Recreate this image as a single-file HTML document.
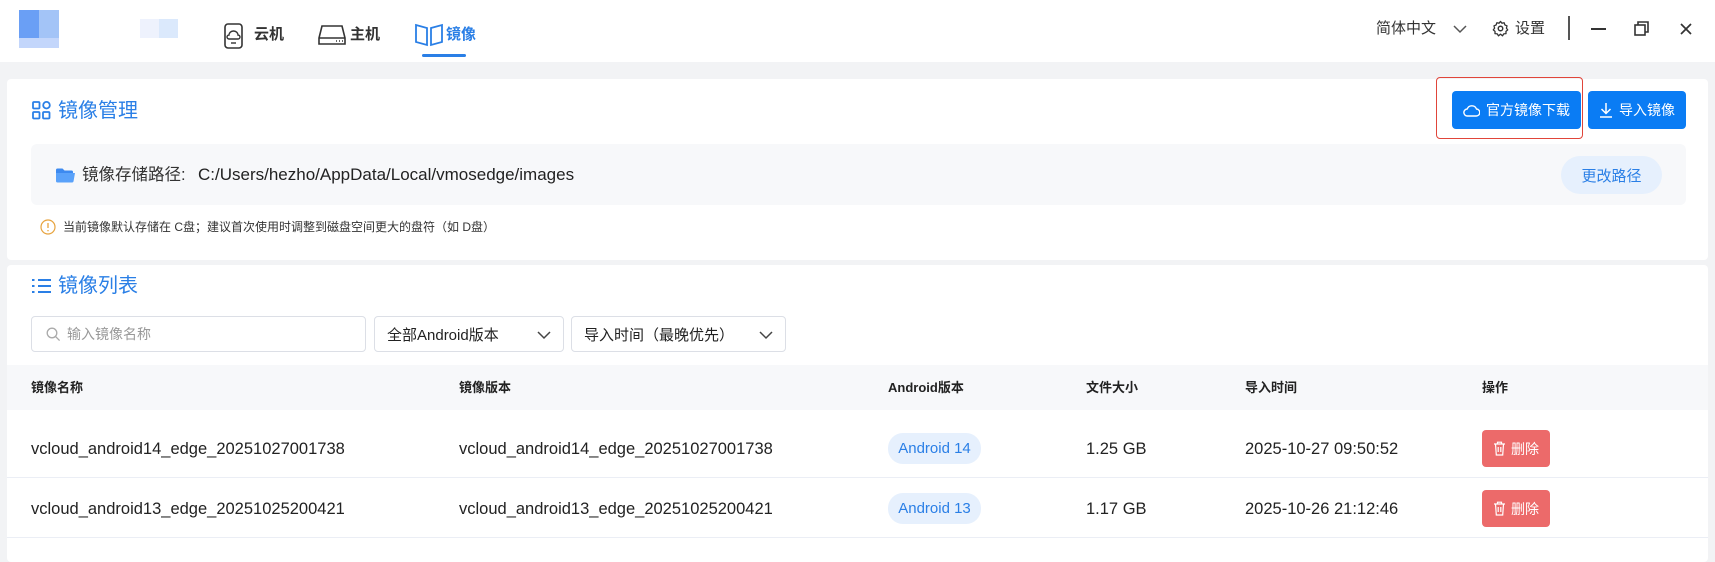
<!DOCTYPE html>
<html><head><meta charset="utf-8"><style>
*{box-sizing:border-box;margin:0;padding:0}
body{width:1715px;height:562px;overflow:hidden;background:#f2f3f5;font-family:"Liberation Sans","Noto Sans CJK SC",sans-serif;color:#222;position:relative}
.a{position:absolute}
.hdr{left:0;top:0;width:1715px;height:62px;background:#fff}
.nav{font-size:15px;font-weight:bold;color:#333;line-height:20px}
.card{background:#fff;border-radius:4px}
.blue{color:#2a7fe6}
.btn{background:#0a7cf4;color:#fff;border-radius:4px;font-size:14px;display:flex;align-items:center;justify-content:center;gap:6px}
.th{font-size:13px;font-weight:bold;color:#222;top:379px;line-height:18px}
.td{font-size:16.5px;color:#222;line-height:20px}
.pill{background:#e6f0fd;color:#2a7fe6;border-radius:15px;font-size:15px;display:flex;align-items:center;justify-content:center}
.del{background:#ec6a6a;color:#fff;border-radius:4px;font-size:14px;display:flex;align-items:center;justify-content:center;gap:5px}
.sel{border:1px solid #dcdfe6;border-radius:4px;background:#fff;font-size:15px;display:flex;align-items:center;padding-left:12px}
</style></head><body>
<div class="a hdr"></div>
<div class="a" style="left:19px;top:10px;width:40px;height:37px;background:linear-gradient(90deg,#6a9ff5 50%,#a3c4f7 50%)"></div>
<div class="a" style="left:19px;top:38px;width:40px;height:10px;background:#c3d6fb"></div>
<div class="a" style="left:140px;top:19px;width:38px;height:19px;background:linear-gradient(90deg,#eef2fd 50%,#dbe9fc 50%)"></div>
<svg class="a" style="left:224px;top:23px" width="19" height="26" viewBox="0 0 19 26"><rect x="1" y="1" width="17" height="24" rx="3" fill="none" stroke="#333" stroke-width="1.6"/><path d="M5 12a4.5 4 0 0 1 9 0a2 2 0 0 1 0 4H5a2 2 0 0 1 0-4z" fill="none" stroke="#333" stroke-width="1.4"/><path d="M7 20h5" stroke="#333" stroke-width="1.4"/></svg>
<div class="a nav" style="left:254px;top:25px">云机</div>
<svg class="a" style="left:318px;top:24px" width="28" height="22" viewBox="0 0 28 22"><path d="M4 2h20l3 12v6H1v-6z" fill="none" stroke="#333" stroke-width="1.6"/><path d="M1 14h26" stroke="#333" stroke-width="1.5"/><path d="M18 17h1M21 17h1M24 17h1" stroke="#333" stroke-width="1.5"/></svg>
<div class="a nav" style="left:350px;top:25px">主机</div>
<svg class="a" style="left:414px;top:23px" width="30" height="24" viewBox="0 0 30 24"><path d="M2 2l11 3v17L2 19z" fill="none" stroke="#2a7fe6" stroke-width="1.8"/><path d="M17 5l11-3v17l-11 3z" fill="none" stroke="#2a7fe6" stroke-width="1.8"/></svg>
<div class="a nav blue" style="left:446px;top:25px">镜像</div>
<div class="a" style="left:422px;top:54px;width:44px;height:3px;background:#2a7fe6;border-radius:2px"></div>
<div class="a" style="left:1376px;top:19px;font-size:15px;line-height:20px;color:#333">简体中文</div>
<svg class="a" style="left:1453px;top:24px" width="14" height="10" viewBox="0 0 14 10"><path d="M1 2l6 6 6-6" fill="none" stroke="#555" stroke-width="1.5"/></svg>
<svg class="a" style="left:1492px;top:20px" width="17" height="17" viewBox="0 0 24 24"><circle cx="12" cy="12" r="3.2" fill="none" stroke="#333" stroke-width="2"/><path d="M12 2l2 2.5 3.2-.6 1 3.1 3 1.3-.9 3.2 1.9 2.5-2.5 2 .1 3.3-3.3.3-1.6 2.8L12 20l-2.9 2.4-1.6-2.8-3.3-.3.1-3.3-2.5-2 1.9-2.5L2.8 8.3l3-1.3 1-3.1L10 4.5z" fill="none" stroke="#333" stroke-width="1.8" stroke-linejoin="round"/></svg>
<div class="a" style="left:1515px;top:19px;font-size:15px;line-height:20px;color:#333">设置</div>
<div class="a" style="left:1568px;top:16px;width:1.5px;height:24px;background:#555"></div>
<div class="a" style="left:1591px;top:28px;width:15px;height:2px;background:#333"></div>
<svg class="a" style="left:1634px;top:21px" width="15" height="15" viewBox="0 0 15 15"><rect x="1" y="4" width="10" height="10" fill="none" stroke="#333" stroke-width="1.6"/><path d="M4 4V1h10v10h-3" fill="none" stroke="#333" stroke-width="1.6"/></svg>
<svg class="a" style="left:1680px;top:23px" width="12" height="12" viewBox="0 0 12 12"><path d="M1 1l10 10M11 1L1 11" stroke="#333" stroke-width="1.7"/></svg>

<div class="a card" style="left:7px;top:79px;width:1701px;height:181px"></div>
<svg class="a" style="left:32px;top:101px" width="19" height="19" viewBox="0 0 19 19"><g fill="none" stroke="#2a7fe6" stroke-width="1.8"><rect x="1" y="1" width="6.5" height="6.5" rx="1"/><circle cx="14.5" cy="4.2" r="3.3"/><rect x="1" y="11" width="6.5" height="6.5" rx="1"/><rect x="11" y="11" width="6.5" height="6.5" rx="1"/></g></svg>
<div class="a blue" style="left:58px;top:98px;font-size:20px;line-height:26px">镜像管理</div>
<div class="a" style="left:1436px;top:77px;width:147px;height:62px;border:1.5px solid #e0453a;border-radius:4px"></div>
<div class="a btn" style="left:1452px;top:91px;width:129px;height:38px"><svg width="17" height="13" viewBox="0 0 17 13"><path d="M4.5 12a3.5 3.5 0 0 1-.3-7A5 5 0 0 1 13.5 5a3.5 3.5 0 0 1-.5 7z" fill="none" stroke="#fff" stroke-width="1.4"/></svg>官方镜像下载</div>
<div class="a btn" style="left:1588px;top:91px;width:98px;height:38px"><svg width="14" height="16" viewBox="0 0 14 16"><path d="M7 1v10M2.5 7l4.5 4.5L11.5 7M1 15h12" fill="none" stroke="#fff" stroke-width="1.5"/></svg>导入镜像</div>
<div class="a" style="left:31px;top:144px;width:1655px;height:61px;background:#f7f8fa;border-radius:6px"></div>
<svg class="a" style="left:56px;top:168px" width="19" height="15" viewBox="0 0 19 15"><path d="M0 2a1.5 1.5 0 0 1 1.5-1.5h5l2 2h7A1.5 1.5 0 0 1 17 4v1H0z" fill="#3d8af0"/><path d="M0 5h19l-1.5 8.5a1.5 1.5 0 0 1-1.5 1H1.5A1.5 1.5 0 0 1 0 13z" fill="#5aa2fa"/></svg>
<div class="a" style="left:82px;top:164px;font-size:16.5px;line-height:22px;color:#333">镜像存储路径:</div>
<div class="a" style="left:198px;top:164px;font-size:17px;line-height:22px;color:#222">C:/Users/hezho/AppData/Local/vmosedge/images</div>
<div class="a blue" style="left:1561px;top:156px;width:101px;height:38px;background:#e6f0fd;border-radius:19px;font-size:15px;display:flex;align-items:center;justify-content:center">更改路径</div>
<svg class="a" style="left:40px;top:219px" width="16" height="16" viewBox="0 0 16 16"><circle cx="8" cy="8" r="7" fill="none" stroke="#e7a33e" stroke-width="1.2"/><path d="M8 4v5M8 11v1.2" stroke="#e7a33e" stroke-width="1.3"/></svg>
<div class="a" style="left:63px;top:219px;font-size:12px;line-height:16px;color:#333">当前镜像默认存储在 C盘；建议首次使用时调整到磁盘空间更大的盘符（如 D盘）</div>

<div class="a card" style="left:7px;top:265px;width:1701px;height:297px"></div>
<svg class="a" style="left:32px;top:278px" width="19" height="16" viewBox="0 0 19 16"><g stroke="#2a7fe6" stroke-width="2"><path d="M0 2h2.5M6 2h13M0 8h2.5M6 8h13M0 14h2.5M6 14h13"/></g></svg>
<div class="a blue" style="left:58px;top:273px;font-size:20px;line-height:26px">镜像列表</div>
<div class="a sel" style="left:31px;top:316px;width:335px;height:36px;color:#999;font-size:14px;padding-left:14px"><svg width="15" height="15" viewBox="0 0 15 15" style="margin-right:6px"><circle cx="6" cy="6" r="4.8" fill="none" stroke="#aaa" stroke-width="1.3"/><path d="M9.6 9.6l4 4" stroke="#aaa" stroke-width="1.3"/></svg>输入镜像名称</div>
<div class="a sel" style="left:374px;top:316px;width:190px;height:36px">全部Android版本<svg class="a" style="right:12px;top:13px" width="14" height="10" viewBox="0 0 14 10"><path d="M1 2l6 6 6-6" fill="none" stroke="#444" stroke-width="1.5"/></svg></div>
<div class="a sel" style="left:571px;top:316px;width:215px;height:36px">导入时间（最晚优先）<svg class="a" style="right:12px;top:13px" width="14" height="10" viewBox="0 0 14 10"><path d="M1 2l6 6 6-6" fill="none" stroke="#444" stroke-width="1.5"/></svg></div>
<div class="a" style="left:7px;top:365px;width:1701px;height:45px;background:#f7f8fa"></div>
<div class="a th" style="left:31px">镜像名称</div>
<div class="a th" style="left:459px">镜像版本</div>
<div class="a th" style="left:888px">Android版本</div>
<div class="a th" style="left:1086px">文件大小</div>
<div class="a th" style="left:1245px">导入时间</div>
<div class="a th" style="left:1482px">操作</div>
<div class="a" style="left:7px;top:477px;width:1701px;height:1px;background:#ebeef5"></div>
<div class="a" style="left:7px;top:537px;width:1701px;height:1px;background:#ebeef5"></div>

<div class="a td" style="left:31px;top:439px">vcloud_android14_edge_20251027001738</div>
<div class="a td" style="left:459px;top:439px">vcloud_android14_edge_20251027001738</div>
<div class="a pill" style="left:888px;top:433px;width:93px;height:31px">Android 14</div>
<div class="a td" style="left:1086px;top:439px">1.25 GB</div>
<div class="a td" style="left:1245px;top:439px">2025-10-27 09:50:52</div>
<div class="a del" style="left:1482px;top:430px;width:68px;height:37px"><svg width="13" height="15" viewBox="0 0 13 15"><path d="M1 3h11M4.5 3V1.2h4V3M2.5 3l.8 11h6.4l.8-11M5.2 6v5M7.8 6v5" fill="none" stroke="#fff" stroke-width="1.2"/></svg>删除</div>

<div class="a td" style="left:31px;top:499px">vcloud_android13_edge_20251025200421</div>
<div class="a td" style="left:459px;top:499px">vcloud_android13_edge_20251025200421</div>
<div class="a pill" style="left:888px;top:493px;width:93px;height:31px">Android 13</div>
<div class="a td" style="left:1086px;top:499px">1.17 GB</div>
<div class="a td" style="left:1245px;top:499px">2025-10-26 21:12:46</div>
<div class="a del" style="left:1482px;top:490px;width:68px;height:37px"><svg width="13" height="15" viewBox="0 0 13 15"><path d="M1 3h11M4.5 3V1.2h4V3M2.5 3l.8 11h6.4l.8-11M5.2 6v5M7.8 6v5" fill="none" stroke="#fff" stroke-width="1.2"/></svg>删除</div>
</body></html>
